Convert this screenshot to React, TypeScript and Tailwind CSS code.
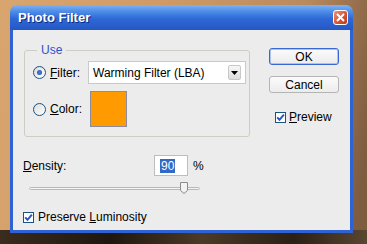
import React from "react";

const font = { fontFamily: '"Liberation Sans", Arial, sans-serif' };

function Radio({ checked }: { checked?: boolean }) {
  return (
    <span className="flex h-[13px] w-[13px] shrink-0 items-center justify-center rounded-full border border-[#1c5180] bg-[linear-gradient(135deg,#dcdcd6,#ffffff)]">
      {checked && <span className="h-[5px] w-[5px] rounded-full bg-[linear-gradient(135deg,#55d051,#1c8d19)] bg-[#2f6ad0] [background:radial-gradient(circle,#4a7fe0,#1f50b8)]" />}
    </span>
  );
}

function Check() {
  return (
    <span className="flex h-[11px] w-[11px] shrink-0 items-center justify-center border border-[#1c5180] bg-white">
      <svg width="9" height="9" viewBox="0 0 9 9">
        <path d="M1.2 4.4 L3.5 6.8 L7.9 1.6" stroke="#2a56c8" strokeWidth="2" fill="none" />
      </svg>
    </span>
  );
}

function Btn({ label, primary }: { label: string; primary?: boolean }) {
  return (
    <div
      className={`flex h-[17px] w-[70px] items-center justify-center rounded-[3px] border bg-[linear-gradient(#fbfbfb,#ececec)] text-[12px] text-black ${
        primary ? "border-[#3a68d0] shadow-[inset_0_0_0_1px_#a8c4f2]" : "border-[#b4b4b4]"
      }`}
    >
      {label}
    </div>
  );
}

export default function App() {
  return (
    <div
      className="relative h-[244px] w-[367px] overflow-hidden bg-[linear-gradient(100deg,#d9a56f_0%,#cf9a66_40%,#b98a5e_75%,#7e5c40_96%)]"
      style={font}
    >
      <div className="absolute bottom-0 left-0 h-[14px] w-full bg-[linear-gradient(90deg,#3a2c1e,#1e170f_30%,#4b3a26_55%,#2a2015_80%,#5a4630)]" />

      <div className="absolute left-[10px] top-[5px] flex h-[228px] w-[343px] flex-col overflow-hidden rounded-t-[7px]">
        <div className="flex h-[25px] shrink-0 items-center justify-between bg-[linear-gradient(#7eb2f4_0%,#4f8ee8_25%,#2e68d6_55%,#2457c4_100%)] pl-[8px] pr-[5px]">
          <span className="text-[13px] font-bold text-white [text-shadow:1px_1px_0_#0b2a7a]">Photo Filter</span>
          <div className="flex h-[15px] w-[15px] items-center justify-center rounded-[3px] border border-white bg-[linear-gradient(135deg,#f0907a,#d9502e_60%,#c0391c)]">
            <svg width="11" height="11" viewBox="0 0 11 11">
              <path d="M2 2 L9 9 M9 2 L2 9" stroke="#fff" strokeWidth="2" />
            </svg>
          </div>
        </div>

        <div className="flex flex-1 border-x-[3px] border-b-[3px] border-[#2f63d4] bg-[#ececec] text-[12px] text-black">
          <div className="flex w-[256px] flex-col pl-[11px] pt-[20px]">
            <div className="relative h-[87px] w-[226px] rounded-[3px] border border-[#cdcdc4]">
              <span className="absolute -top-[8px] left-[12px] bg-[#ececec] px-[4px] text-[12px] leading-[14px] text-[#2a52cf]">Use</span>
              <div className="ml-[8px] mt-[10px] flex h-[23px] items-center">
                <Radio checked />
                <span className="ml-[4px] w-[38px]">
                  <u>F</u>ilter:
                </span>
                <div className="flex h-[23px] w-[158px] items-center justify-between border border-[#c9c9c9] bg-white pl-[4px] pr-[4px]">
                  <span>Warming Filter (LBA)</span>
                  <span className="flex h-[15px] w-[13px] items-center justify-center rounded-[2px] border border-[#c8c8c8] bg-[linear-gradient(#f7f7f7,#dcdcdc)]">
                    <svg width="7" height="4" viewBox="0 0 7 4">
                      <path d="M0 0 L7 0 L3.5 4 Z" fill="#000" />
                    </svg>
                  </span>
                </div>
              </div>
              <div className="ml-[8px] mt-[7px] flex h-[36px] items-center">
                <Radio />
                <span className="ml-[4px] w-[40px]">
                  <u>C</u>olor:
                </span>
                <div className="h-[36px] w-[37px] border border-[#8c8c9c] bg-[#ff9a00]" />
              </div>
            </div>

            <div className="ml-[-1px] mt-[18px] flex h-[21px] items-center">
              <span className="w-[131px]">
                <u>D</u>ensity:
              </span>
              <div className="flex h-[21px] w-[34px] items-center border border-[#bdbdbd] bg-white pl-[5px]">
                <span className="bg-[#3169c6] px-[1px] leading-[14px] text-white">90</span>
              </div>
              <span className="ml-[5px]">%</span>
            </div>

            <div className="relative ml-[5px] mt-[6px] h-[11px] w-[171px]">
              <div className="absolute left-0 top-[5px] h-[3px] w-[171px] rounded-[2px] border border-[#b8b8b8] bg-[#f4f4f4]" />
              <svg className="absolute left-[151px] top-0" width="8" height="12" viewBox="0 0 8 12">
                <path d="M0.5 0.5 H7.5 V8.5 L4 11.5 L0.5 8.5 Z" fill="#f2f2f2" stroke="#8a8a8a" />
              </svg>
            </div>

            <div className="ml-[-1px] mt-[15px] flex items-center">
              <Check />
              <span className="ml-[4px]">
                Preserve <u>L</u>uminosity
              </span>
            </div>
          </div>

          <div className="flex flex-col pt-[18px]">
            <Btn label="OK" primary />
            <div className="mt-[11px]">
              <Btn label="Cancel" />
            </div>
            <div className="ml-[6px] mt-[15px] flex items-center">
              <Check />
              <span className="ml-[3px]">
                <u>P</u>review
              </span>
            </div>
          </div>
        </div>
      </div>
    </div>
  );
}
